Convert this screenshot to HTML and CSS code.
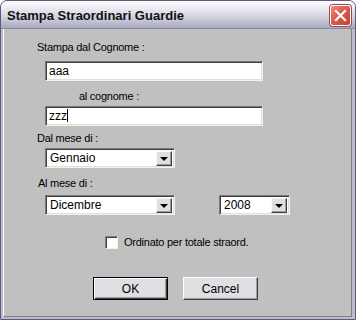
FILE: index.html
```html
<!DOCTYPE html>
<html>
<head>
  <title>Stampa Straordinari Guardie</title>
  <link rel="stylesheet" href="styles.css">
</head>
<body>
  <div class="window">
    <div class="titlebar">
      <span class="title">Stampa Straordinari Guardie</span>
      <div class="close">
        <svg width="13" height="13" viewBox="0 0 13 13">
          <path d="M2 2 L11 11 M11 2 L2 11" stroke="#fff" stroke-width="2.2" stroke-linecap="square"/>
        </svg>
      </div>
    </div>
    <div class="frame">
      <div class="dialog">
        <div class="label lbl1">Stampa dal Cognome :</div>
        <div class="textbox tb1">aaa</div>
        <div class="label lbl2">al cognome :</div>
        <div class="textbox tb2">zzz<span class="caret"></span></div>
        <div class="label lbl3">Dal mese di :</div>
        <div class="row r1">
          <div class="combo wide">
            <span class="value">Gennaio</span>
            <span class="arrow"></span>
          </div>
        </div>
        <div class="label lbl4">Al mese di :</div>
        <div class="row r2">
          <div class="combo wide">
            <span class="value">Dicembre</span>
            <span class="arrow"></span>
          </div>
          <div class="combo year">
            <span class="value">2008</span>
            <span class="arrow"></span>
          </div>
        </div>
        <div class="check">
          <span class="box"></span>
          <span class="label">Ordinato per totale straord.</span>
        </div>
        <div class="buttons">
          <div class="btn default"><span>OK</span></div>
          <div class="btn">Cancel</div>
        </div>
      </div>
    </div>
  </div>
</body>
</html>
```

FILE: styles.css
```css
body {
  margin: 0;
  background: #ffffff;
}
.window {
  width: 356px;
  height: 320px;
  box-sizing: border-box;
  border: 1px solid #5c5c78;
  border-radius: 7px 7px 0 0;
  background: #bcbcd0;
  display: flex;
  flex-direction: column;
  overflow: hidden;
}
.titlebar {
  height: 27px;
  display: flex;
  align-items: center;
  justify-content: space-between;
  padding: 0 4px 0 6px;
  background: linear-gradient(#fdfdfe 0%, #ececf2 25%, #d6d6e2 55%, #b8b8cc 85%, #a8a8c0 100%);
  border-bottom: 1px solid #8a8aa2;
}
.title {
  font-family: "Liberation Sans", Arial, sans-serif;
  font-weight: bold;
  font-size: 13px;
  color: #111;
  margin-top: 1px;
}
.close {
  width: 19px;
  height: 19px;
  margin-top: 2px;
  border: 1px solid #ffffff;
  border-radius: 3px;
  background: linear-gradient(135deg, #e88a7a 0%, #d9584a 50%, #c04434 100%);
  box-shadow: 0 0 0 1px #a04a50;
  display: flex;
  align-items: center;
  justify-content: center;
}
.frame {
  flex: 1;
  padding: 0 3px 2px 2px;
  display: flex;
}
.dialog {
  flex: 1;
  background: #c0c0c0;
  border-left: 1px solid #ffffff;
  border-bottom: 1px solid #808080;
  border-right: 1px solid #808080;
  padding-top: 12px;
  font-family: "Liberation Sans", Arial, sans-serif;
  font-size: 11px;
  color: #000;
}
.label {
  line-height: 13px;
  height: 13px;
  letter-spacing: -0.25px;
}
.lbl1 { margin-left: 33px; }
.lbl2 { margin: 9px 0 0 75px; }
.lbl3 { margin: 6px 0 0 33px; }
.lbl4 { margin: 9px 0 0 34px; }
.textbox {
  width: 218px;
  height: 20px;
  box-sizing: border-box;
  margin-left: 41px;
  background: #fff;
  border-top: 1px solid #7a7a7a;
  border-left: 1px solid #7a7a7a;
  border-right: 1px solid #f4f2e8;
  border-bottom: 1px solid #f4f2e8;
  box-shadow: inset 1px 1px 0 #404040, inset -1px -1px 0 #e4e0d0;
  padding: 0 3px;
  line-height: 18px;
  font-size: 12px;
}
.tb1 { margin-top: 7px; }
.tb2 { margin-top: 3px; }
.caret {
  display: inline-block;
  width: 1px;
  height: 13px;
  background: #000;
  vertical-align: -2px;
}
.row {
  display: flex;
  margin-left: 41px;
}
.r1 { margin-top: 3px; }
.r2 { margin-top: 5px; }
.combo {
  height: 20px;
  box-sizing: border-box;
  background: #fff;
  border-top: 1px solid #7a7a7a;
  border-left: 1px solid #7a7a7a;
  border-right: 1px solid #f4f2e8;
  border-bottom: 1px solid #f4f2e8;
  box-shadow: inset 1px 1px 0 #404040, inset -1px -1px 0 #e4e0d0;
  display: flex;
  align-items: center;
  justify-content: space-between;
  padding: 0 2px 0 4px;
  font-size: 12px;
}
.wide { width: 130px; }
.year { width: 71px; margin-left: 44px; }
.arrow {
  width: 16px;
  height: 15px;
  box-sizing: border-box;
  background: #e0dfe3;
  border-top: 1px solid #f8f8f8;
  border-left: 1px solid #f8f8f8;
  border-right: 1px solid #404040;
  border-bottom: 1px solid #404040;
  box-shadow: inset -1px -1px 0 #9d9da1;
  display: flex;
  align-items: center;
  justify-content: center;
}
.arrow::after {
  content: "";
  border-left: 4px solid transparent;
  border-right: 4px solid transparent;
  border-top: 4px solid #000;
  margin-top: 1px;
}
.check {
  display: flex;
  align-items: center;
  margin: 21px 0 0 101px;
}
.box {
  width: 13px;
  height: 13px;
  box-sizing: border-box;
  background: #fffdf4;
  border-top: 1px solid #808080;
  border-left: 1px solid #808080;
  border-right: 1px solid #f4f2e8;
  border-bottom: 1px solid #f4f2e8;
  box-shadow: inset 1px 1px 0 #404040;
  margin-right: 6px;
}
.buttons {
  display: flex;
  margin: 28px 0 0 89px;
}
.btn {
  width: 75px;
  height: 23px;
  box-sizing: border-box;
  background: #e0dfe3;
  border-top: 1px solid #ffffff;
  border-left: 1px solid #ffffff;
  border-right: 1px solid #404040;
  border-bottom: 1px solid #404040;
  box-shadow: inset -1px -1px 0 #9d9da1;
  display: flex;
  align-items: center;
  justify-content: center;
  font-size: 12px;
  margin-right: 15px;
}
.btn.default {
  border: 1px solid #000;
  box-shadow: inset 1px 1px 0 #ffffff, inset -1px -1px 0 #404040, inset -2px -2px 0 #9d9da1;
}
```
